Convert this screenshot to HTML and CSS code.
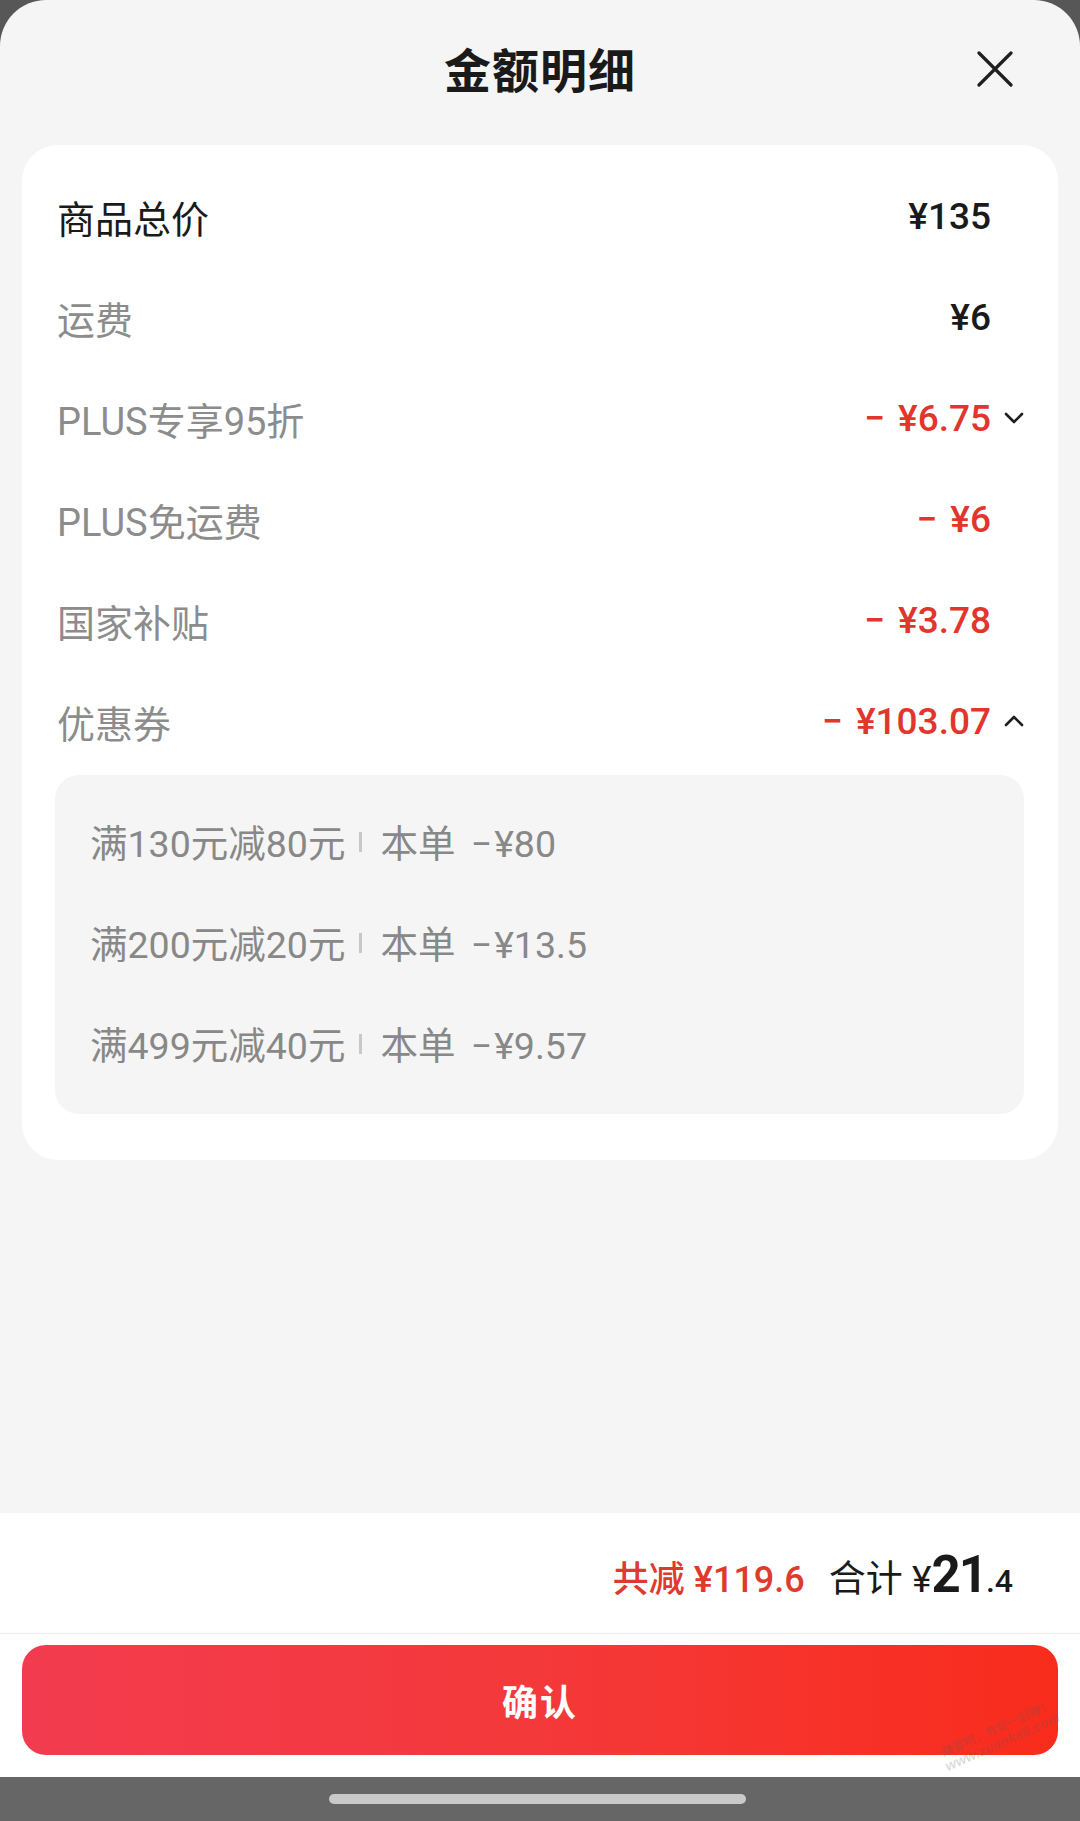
FILE: index.html
```html
<!DOCTYPE html>
<html>

<head>
    <meta charset="utf-8">
    <title>金额明细</title>

    <link rel="stylesheet" href="styles.css">
</head>

<body>

    <div class="sheet">

        <header class="sheet-header">
            <span></span>
            <h1 class="sheet-title">金额明细</h1>
            <button class="close-btn" aria-label="关闭">
                <svg viewBox="0 0 36 36" width="36" height="36">
                    <path d="M2 2 L34 34 M34 2 L2 34" stroke="#1f1f1f" stroke-width="3.2" stroke-linecap="round" fill="none" />
                </svg>
            </button>
        </header>

        <section class="card">

            <div class="row">
                <span class="label label-dark">商品总价</span>
                <span class="value">¥135</span>
                <span class="chev"></span>
            </div>

            <div class="row">
                <span class="label">运费</span>
                <span class="value">¥6</span>
                <span class="chev"></span>
            </div>

            <div class="row">
                <span class="label">PLUS专享95折</span>
                <span class="value value-red"><span class="minus">−</span>¥6.75</span>
                <span class="chev">
                    <svg viewBox="0 0 20 12" width="20" height="12">
                        <path d="M2 2 L10 10 L18 2" stroke="#1f1f1f" stroke-width="2.6" fill="none" stroke-linecap="round" stroke-linejoin="round" />
                    </svg>
                </span>
            </div>

            <div class="row">
                <span class="label">PLUS免运费</span>
                <span class="value value-red"><span class="minus">−</span>¥6</span>
                <span class="chev"></span>
            </div>

            <div class="row">
                <span class="label">国家补贴</span>
                <span class="value value-red"><span class="minus">−</span>¥3.78</span>
                <span class="chev"></span>
            </div>

            <div class="row">
                <span class="label">优惠券</span>
                <span class="value value-red"><span class="minus">−</span>¥103.07</span>
                <span class="chev">
                    <svg viewBox="0 0 20 12" width="20" height="12">
                        <path d="M2 10 L10 2 L18 10" stroke="#1f1f1f" stroke-width="2.6" fill="none" stroke-linecap="round" stroke-linejoin="round" />
                    </svg>
                </span>
            </div>

            <div class="coupons">
                <div class="coupon">
                    <span>满130元减80元</span>
                    <i class="coupon-sep"></i>
                    <span>本单 <span class="coupon-minus">−</span>¥80</span>
                </div>
                <div class="coupon">
                    <span>满200元减20元</span>
                    <i class="coupon-sep"></i>
                    <span>本单 <span class="coupon-minus">−</span>¥13.5</span>
                </div>
                <div class="coupon">
                    <span>满499元减40元</span>
                    <i class="coupon-sep"></i>
                    <span>本单 <span class="coupon-minus">−</span>¥9.57</span>
                </div>
            </div>

        </section>

        <div class="spacer"></div>

        <footer class="sheet-footer">
            <div class="summary">
                <span class="saved">共减 ¥119.6</span>
                <span class="total">合计 ¥<b class="total-int">21</b><span class="total-dec">.4</span></span>
            </div>
            <button class="confirm-btn">确认</button>
        </footer>

    </div>

    <div class="home-bar">
        <span class="home-indicator"></span>
    </div>

    <div class="watermark">
        <span>赚客吧，有奖一起赚！</span>
        <span>www.zuanke8.com</span>
    </div>

</body>

</html>
```

FILE: styles.css
```css
* {
    margin: 0;
    padding: 0;
    box-sizing: border-box;
}

html,
body {
    width: 100%;
    height: 100%;
}

body {
    position: relative;
    background-color: #575757;
    font-family: Roboto, "Noto Sans CJK SC", sans-serif;
    color: #1a1a1a;
    overflow: hidden;
}

.sheet {
    display: flex;
    flex-direction: column;
    height: 1777px;
    background-color: #f5f5f5;
    border-radius: 46px 46px 0 0;
}

.sheet-header {
    display: grid;
    grid-template-columns: 1fr auto 1fr;
    align-items: center;
    height: 145px;
    padding-bottom: 11px;
}

.sheet-title {
    font-size: 47px;
    font-weight: 700;
    letter-spacing: 1px;
    color: #1a1a1a;
}

.close-btn {
    justify-self: end;
    margin-right: 67px;
    margin-top: 4px;
    width: 36px;
    height: 36px;
    border: none;
    background: none;
    display: flex;
}

.card {
    margin: 0 22px;
    padding: 24px 0 46px;
    background-color: #fff;
    border-radius: 36px;
}

.row {
    display: flex;
    align-items: center;
    height: 101px;
    padding: 0 34px 6px 35px;
}

.label {
    flex: 1;
    font-size: 38px;
    color: #8c8c8c;
}

.label-dark {
    color: #1a1a1a;
}

.value {
    font-size: 37px;
    font-weight: 500;
    color: #1a1a1a;
}

.value-red {
    color: #e2352b;
}

.minus {
    margin-right: 13px;
}

.chev {
    display: flex;
    width: 20px;
    margin-left: 13px;
    margin-top: -2px;
}

.coupons {
    margin: 0 34px 0 33px;
    padding: 20px 35px 16px;
    background-color: #f5f5f5;
    border-radius: 24px;
}

.coupon {
    display: flex;
    align-items: center;
    height: 101px;
    padding-bottom: 11px;
    font-size: 37.5px;
    color: #888;
}

.coupon-sep {
    display: inline-block;
    width: 3px;
    height: 20px;
    margin: 4px 18px 0 14px;
    background-color: #c8c8c8;
}

.coupon-minus {
    margin-left: 6px;
    margin-right: 2px;
}

.spacer {
    flex: 1;
}

.sheet-footer {
    background-color: #fff;
}

.summary {
    display: flex;
    justify-content: flex-end;
    align-items: baseline;
    height: 121px;
    padding: 32px 67px 0 0;
    border-bottom: 1px solid #ececec;
}

.saved {
    font-size: 36px;
    font-weight: 500;
    color: #de3a2e;
    margin-right: 24px;
}

.total {
    font-size: 37px;
    color: #1a1a1a;
}

.total-int {
    font-size: 51px;
    font-weight: 700;
    letter-spacing: -2px;
}

.total-dec {
    font-size: 32px;
    font-weight: 500;
}

.confirm-btn {
    display: block;
    width: calc(100% - 44px);
    height: 110px;
    margin: 11px 22px 22px;
    border: none;
    border-radius: 24px;
    background: linear-gradient(90deg, #f23b4f 0%, #f4393a 50%, #f92c1c 100%);
    color: #fff;
    font-family: Roboto, "Noto Sans CJK SC", sans-serif;
    font-size: 36px;
    font-weight: 700;
    letter-spacing: 2px;
}

.home-bar {
    display: flex;
    justify-content: center;
    align-items: center;
    height: 44px;
    background-color: #666;
}

.home-indicator {
    display: block;
    width: 417px;
    height: 10px;
    margin-left: -5px;
    border-radius: 5px;
    background-color: #c9c9c9;
}

.watermark {
    position: absolute;
    left: 938px;
    top: 1722px;
    display: flex;
    flex-direction: column;
    align-items: center;
    transform: rotate(-24deg);
    font-family: "Liberation Sans", "Noto Sans CJK SC", sans-serif;
    font-weight: 700;
    color: rgba(90, 90, 90, 0.22);
    line-height: 1.1;
}

.watermark span:first-child {
    font-size: 12px;
}

.watermark span:last-child {
    font-size: 14px;
    font-style: italic;
}
```
